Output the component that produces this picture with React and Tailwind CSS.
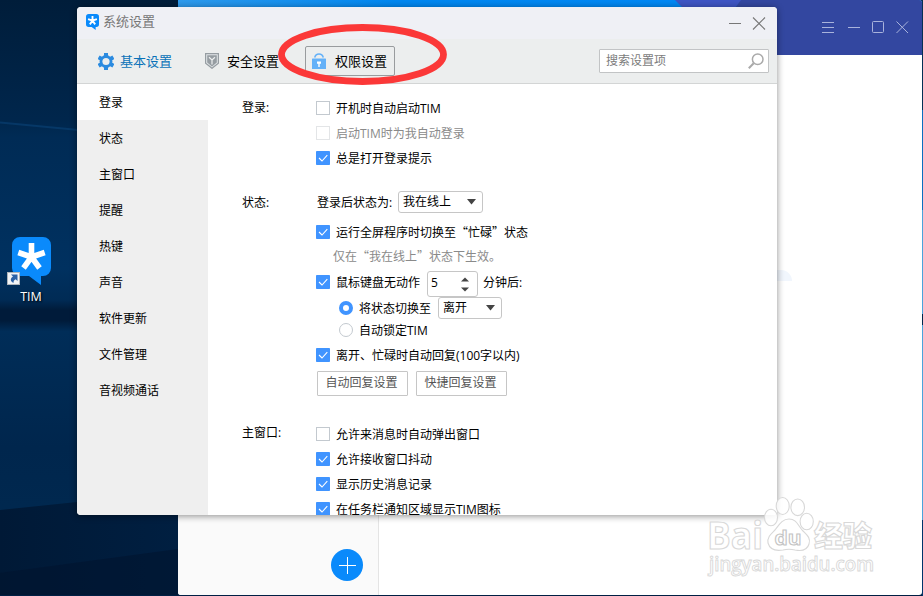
const NAV = ['登录', '状态', '主窗口', '提醒', '热键', '声音', '软件更新', '文件管理', '音视频通话'];

function TimLogo({ className }) {
  return (
    <svg viewBox="0 0 39 48" className={className} aria-hidden="true">
      <path d="M8 0h23a8 8 0 0 1 8 8v23a8 8 0 0 1-8 8h-2v9l-12-9H8a8 8 0 0 1-8-8V8a8 8 0 0 1 8-8z" fill="#0a8afb" />
      <g stroke="#fff" strokeWidth="5.6">
        <path d="M19.5 20V6M19.5 20l13.2-4.5M19.5 20l8 11M19.5 20l-8 11M19.5 20L6.3 15.500" />
      </g>
    </svg>
  );
}

function Gear() {
  return (
    <svg viewBox="0 0 16 17" className="h-[17px] w-4" aria-hidden="true">
      <g fill="#2b8be0">
        <rect x="6" y="0" width="4" height="17" />
        <rect x="6" y="0" width="4" height="17" transform="rotate(60 8 8.5)" />
        <rect x="6" y="0" width="4" height="17" transform="rotate(120 8 8.5)" />
        <circle cx="8" cy="8.500" r="6.400" />
      </g>
      <circle cx="8" cy="8.500" r="3.600" fill="#eceeee" />
    </svg>
  );
}

function Shield() {
  return (
    <svg viewBox="0 0 14 16" className="h-4 w-3.5" aria-hidden="true">
      <path d="M.6.600h12.800v9.600L7 15.300.6 10.200z" fill="#e2e6e8" stroke="#969da2" strokeWidth="1.200" />
      <path d="M2.200 2.200h9.600v7.200L7 13.400 2.200 9.400z" fill="#969da2" />
      <path d="M4 4.200L7 7l3-2.800M7 7v4.500" stroke="#eef0f0" strokeWidth="1.200" fill="none" />
    </svg>
  );
}

function Lock() {
  return (
    <svg viewBox="0 0 14 16" className="h-4 w-3.5" aria-hidden="true">
      <path d="M2.700 4.500C3.300 2 4.800.9 7 .9s3.700 1.100 4.300 3.600" fill="none" stroke="#64b1f8" strokeWidth="1.500" />
      <rect x="0" y="5.500" width="14" height="10.500" rx=".6" fill="#64b1f8" />
      <path d="M5 8.500h4v2.200H7.700V14H6.300v-3.300H5z" fill="#fff" />
    </svg>
  );
}

function Box({ on, dim }) {
  if (!on) return <span className={`h-3.5 w-3.5 shrink-0 border bg-white ${dim ? 'border-[#e3e5e7]' : 'border-[#c3c9cf]'}`} />;
  return (
    <svg viewBox="0 0 14 14" className="h-3.5 w-3.5 shrink-0" aria-hidden="true">
      <rect width="14" height="14" rx=".8" fill="#4094ff" />
      <path d="M3 7l3 3 5.300-5.800" fill="none" stroke="#fff" strokeWidth="1.100" />
    </svg>
  );
}

function Check({ on, dim, children, className = '', textClass = 'pt-0.5' }) {
  return (
    <div className={`flex h-6 items-center gap-1.5 whitespace-nowrap ${dim ? 'text-[#8a8a8a]' : ''} ${className}`}>
      <Box on={on} dim={dim} />
      <span className={textClass}>{children}</span>
    </div>
  );
}

function Select({ children, className }) {
  return (
    <div className={`flex h-[22px] items-center justify-between rounded-[3px] border border-[#c6c6c6] bg-white pl-1 pr-1.5 ${className}`}>
      <span>{children}</span>
      <svg viewBox="0 0 9 6" className="-mt-px h-1.5 w-[9px]" aria-hidden="true"><path d="M0 0h9L4.500 5.500z" fill="#444" /></svg>
    </div>
  );
}

function MainWindow() {
  return (
    <div className="absolute left-[178px] top-0 flex h-[595px] w-[744px] flex-col overflow-hidden rounded-b-[3px] rounded-tr-[3px] bg-white">
      <header className="flex h-[55px] shrink-0 justify-end bg-[linear-gradient(90deg,#2e9aec_0px,#0087f0_220px,#0088f4_500px)]">
        <svg viewBox="0 0 252 55" className="h-[55px] w-[252px]" aria-hidden="true">
          <path d="M5 0h67L22 55h38z" fill="#3e55c4" />
          <path d="M71 0h181v55H30z" fill="#3347a0" />
          <g fill="none" stroke="#a9b3dc" strokeWidth="1">
            <path d="M152 22.500h12M152 27.500h12M152 32.500h12M178 27.500h12" />
            <rect x="202.500" y="21.500" width="11" height="11" rx="1" />
            <path d="M226.500 21.500l11.500 11.500M238 21.500L226.500 33" />
          </g>
        </svg>
      </header>
      <div className="flex flex-1">
        <aside className="flex w-[201px] flex-col items-end justify-end border-r border-[#e4e4e4] bg-[#fafafa] pb-[14px] pr-[15px]">
          <div className="flex h-8 w-8 items-center justify-center rounded-full bg-[#0a8afb]">
            <svg viewBox="0 0 17 17" className="h-[17px] w-[17px]" aria-hidden="true"><path d="M8.500 0v17M0 8.500h17" stroke="#fff" /></svg>
          </div>
        </aside>
        <div className="relative flex-1">
          <div className="absolute left-[388px] top-[215px] h-[11px] w-[25px] rounded-tr-full bg-[#f1f6fd]" />
        </div>
      </div>
    </div>
  );
}

function SettingsForm() {
  return (
    <main className="flex-1 bg-white pl-[34px] pt-3 text-black">
      <section className="flex items-start">
        <h3 className="w-[74px] leading-6">登录:</h3>
        <div className="flex flex-col gap-px">
          <Check>开机时自动启动TIM</Check>
          <Check dim>启动TIM时为我自动登录</Check>
          <Check on>总是打开登录提示</Check>
        </div>
      </section>
      <section className="mt-[21px] flex items-start">
        <h3 className="w-[74px] leading-6">状态:</h3>
        <div>
          <div className="flex h-[22px] items-center">
            <span className="w-[82px] whitespace-nowrap pl-px pt-0.5">登录后状态为:</span>
            <Select className="w-[85px]">我在线上</Select>
          </div>
          <Check on className="mt-[7px]" textClass="font-['Noto_Sans_CJK_SC',sans-serif]">运行全屏程序时切换至“忙碌”状态</Check>
          <div className="mt-0.5 h-5 pl-[17px] font-['Noto_Sans_CJK_SC',sans-serif] leading-5 text-[#8a8a8a]">仅在“我在线上”状态下生效。</div>
          <div className="mt-[5px] flex h-[26px] items-start">
            <Check on className="-mt-px w-[111px]">鼠标键盘无动作</Check>
            <div className="flex h-[26px] w-[51px] items-center justify-between rounded-[3px] border border-[#c6c6c6] bg-white pl-[3px] pr-2">
              <span className="-mt-0.5">5</span>
              <svg viewBox="0 0 8 15" className="h-[15px] w-2" aria-hidden="true"><path d="M0 4.500h8L4 .5zM0 10.500h8l-4 4z" fill="#444" /></svg>
            </div>
            <span className="ml-[5px] leading-6">分钟后:</span>
          </div>
          <div className="flex h-[22px] items-center pl-[23px]">
            <span className="h-3.5 w-3.5 rounded-full border-[4px] border-[#4094ff] bg-white" />
            <span className="ml-1.5 w-[79px] pt-0.5">将状态切换至</span>
            <Select className="w-16">离开</Select>
          </div>
          <div className="mt-px flex h-5 items-center gap-1.5 pl-[23px]">
            <span className="h-3.5 w-3.5 rounded-full border border-[#c3c9cf]" />
            <span className="pt-0.5">自动锁定TIM</span>
          </div>
          <Check on className="mt-[3px]">离开、忙碌时自动回复(100字以内)</Check>
          <div className="mt-1 flex gap-2 pl-px text-[#555]">
            <button className="h-[25px] w-[91px] rounded-[1px] border border-[#c6c6c6] pb-px pr-0.5">自动回复设置</button>
            <button className="h-[25px] w-[91px] rounded-[1px] border border-[#c6c6c6] pb-px pr-0.5">快捷回复设置</button>
          </div>
        </div>
      </section>
      <section className="mt-[26px] flex items-start">
        <h3 className="w-[74px] leading-[22px]">主窗口:</h3>
        <div className="flex flex-col gap-px">
          <Check>允许来消息时自动弹出窗口</Check>
          <Check on>允许接收窗口抖动</Check>
          <Check on>显示历史消息记录</Check>
          <Check on>在任务栏通知区域显示TIM图标</Check>
        </div>
      </section>
    </main>
  );
}

function SettingsWindow() {
  return (
    <div className="absolute left-[77px] top-[7px] flex h-[508px] w-[700px] flex-col overflow-hidden rounded-[4px] bg-white shadow-[0_1px_7px_rgba(0,0,0,0.45)]">
      <header className="flex h-8 shrink-0 items-center bg-[#eff0f5] pl-[9px] pr-[11px]">
        <TimLogo className="-mt-0.5 h-4 w-[13px]" />
        <h1 className="ml-1 pb-1 text-[13px] text-[#777]">系统设置</h1>
        <svg viewBox="0 0 38 14" className="ml-auto h-3.5 w-[38px]" aria-hidden="true">
          <path d="M1 7.500h12M25 1.500l12 12M37 1.500l-12 12" fill="none" stroke="#777" strokeWidth="1.100" />
        </svg>
      </header>
      <nav className="flex h-[45px] shrink-0 items-center border-b border-[#d3d5d5] bg-[#eceeee] pl-[21px] pr-2 text-[13px] text-black">
        <Gear />
        <span className="ml-1.5 w-[85px] text-[#0a72b8]">基本设置</span>
        <Shield />
        <span className="ml-2 w-[78px]">安全设置</span>
        <div className="flex h-[30px] w-[90px] items-center gap-[9px] rounded-[2px] border border-[#999c9e] pl-1.5">
          <Lock />
          <span className="whitespace-nowrap">权限设置</span>
        </div>
        <div className="ml-auto flex h-6 w-[170px] items-center justify-between rounded-[1px] border border-[#c2c4c5] bg-white pl-1.5 pr-1 text-[12px] text-[#7c7c7c]">
          <span>搜索设置项</span>
          <svg viewBox="0 0 16 16" className="h-4 w-4" aria-hidden="true">
            <circle cx="9.700" cy="6.300" r="5.300" fill="none" stroke="#aaa" strokeWidth="1.500" />
            <path d="M5.700 10.300L.8 15.200" stroke="#aaa" strokeWidth="2" />
          </svg>
        </div>
      </nav>
      <div className="flex min-h-0 flex-1 text-[12px]">
        <aside className="w-[131px] shrink-0 bg-[#efefef]">
          {NAV.map((n, i) => (
            <div key={n} className={`flex h-9 items-center pl-[22px] pt-px text-black ${i === 0 ? 'bg-white' : ''}`}>{n}</div>
          ))}
        </aside>
        <SettingsForm />
      </div>
    </div>
  );
}

function Watermark() {
  return (
    <svg viewBox="0 0 190 100" className="absolute left-[700px] top-[492px] h-[100px] w-[190px]" aria-hidden="true">
      <g fill="#fff" fillOpacity=".85" stroke="#d8d8d8" strokeWidth="1.100" fontFamily="'Open Sans','Noto Sans CJK SC',sans-serif">
        <ellipse cx="71" cy="25.500" rx="6.500" ry="8.300" />
        <ellipse cx="82.700" cy="14" rx="6.500" ry="8.500" />
        <ellipse cx="97.700" cy="15.300" rx="6.800" ry="8.300" />
        <ellipse cx="106.700" cy="29.500" rx="6.600" ry="8.300" />
        <path d="M89 27c8 0 9 7 14 12 4 4 8 7 6 13-2 7-9 7-14 6-4-1-8-1-12 0-6 1-13 0-15-7-1-6 3-9 7-13 4-5 7-11 14-11z" />
        <text x="7" y="57" fontSize="37" fontWeight="700" textLength="56" lengthAdjust="spacingAndGlyphs">Bai</text>
        <text x="74.500" y="53" fontSize="20" fontWeight="700" stroke="#c4c4c4" textLength="27" lengthAdjust="spacingAndGlyphs">du</text>
        <text x="114" y="54.500" fontSize="29" fontWeight="900" fontFamily="'Noto Sans CJK SC',sans-serif">经验</text>
        <text x="9" y="79" fontSize="19" fontWeight="600" strokeWidth=".9" textLength="165" lengthAdjust="spacingAndGlyphs">jingyan.baidu.com</text>
      </g>
    </svg>
  );
}

export default function App() {
  return (
    <div className="relative h-[596px] w-[923px] overflow-hidden bg-[#00264c] font-['Open_Sans','Noto_Sans_CJK_SC',sans-serif] text-[12px] leading-[18px]">
      <svg viewBox="0 0 923 596" className="absolute inset-0 h-full w-full" aria-hidden="true">
        <defs>
          <linearGradient id="sky" x1="0" y1="0" x2="0" y2="1">
            <stop offset="0" stopColor="#001d3a" />
            <stop offset=".2" stopColor="#00264c" />
            <stop offset=".23" stopColor="#002b55" />
            <stop offset=".45" stopColor="#003160" />
            <stop offset=".503" stopColor="#002b55" />
            <stop offset=".52" stopColor="#001b3a" />
            <stop offset=".538" stopColor="#001b3a" />
            <stop offset=".556" stopColor="#002d58" />
            <stop offset=".75" stopColor="#00264d" />
            <stop offset=".85" stopColor="#00284f" />
            <stop offset="1" stopColor="#002347" />
          </linearGradient>
          <linearGradient id="floor" x1="0" y1="0" x2="1" y2="0">
            <stop offset="0" stopColor="#001936" />
            <stop offset="1" stopColor="#001f41" />
          </linearGradient>
        </defs>
        <rect width="923" height="596" fill="url(#sky)" />
        <path d="M0 122.500l178 17" stroke="#0a4377" strokeWidth="2" opacity=".6" />
        <path d="M0 510l77-8 101-10v104H0z" fill="url(#floor)" />
        <path d="M0 573l178-24v47H0z" fill="#00142f" opacity=".6" />
        <rect y="595" width="923" height="1" fill="#001f44" />
        <rect x="922" y="0" width="1" height="110" fill="#053055" />
        <rect x="922" y="110" width="1" height="100" fill="#0b6fc0" />
        <rect x="922" y="210" width="1" height="310" fill="#4ba3dc" />
        <rect x="922" y="314" width="1" height="11" fill="#00264c" />
        <rect x="922" y="520" width="1" height="76" fill="#00356b" />
      </svg>
      <div className="absolute left-[7px] top-[237px] flex w-12 flex-col items-center">
        <div className="relative h-12 w-[39px]">
          <TimLogo className="h-12 w-[39px]" />
          <svg viewBox="0 0 13 13" className="absolute -left-[5px] top-[35px] h-[13px] w-[13px]" aria-hidden="true">
            <rect x=".5" y=".5" width="12" height="12" fill="#f2f4f6" stroke="#aeb4ba" />
            <path d="M4 2.500h6.500V9L8.600 7.200C7 8 6.500 9.300 6.500 11 3 9.500 3 6.300 6 4.500z" fill="#2c62a6" />
          </svg>
        </div>
        <span className="mt-[3px] text-[12.500px] text-white [text-shadow:1px_1px_2px_#000]">TIM</span>
      </div>
      <MainWindow />
      <SettingsWindow />
      <svg viewBox="0 0 180 70" className="absolute left-[272px] top-5 h-[70px] w-[180px]" aria-hidden="true">
        <ellipse cx="90.500" cy="34.500" rx="81" ry="27" fill="none" stroke="#fb3838" strokeWidth="6.800" />
      </svg>
      <Watermark />
    </div>
  );
}
